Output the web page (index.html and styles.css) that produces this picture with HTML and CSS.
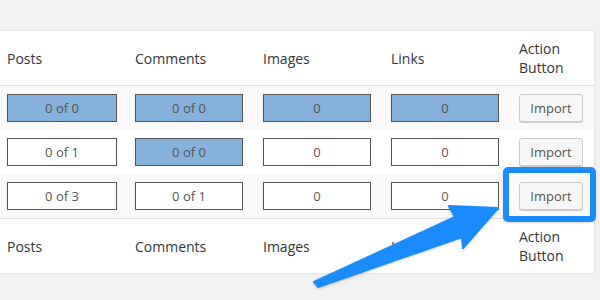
FILE: index.html
```html
<!DOCTYPE html>
<html lang="en">
<head>
  <meta charset="UTF-8" />
  <title>Import</title>
  <link rel="stylesheet" href="styles.css">
</head>
<body>
  <div class="panel">
    <table class="import-table">
      <colgroup>
        <col class="col-data"><col class="col-data"><col class="col-data"><col class="col-data"><col>
      </colgroup>
      <thead>
        <tr>
          <th>Posts</th>
          <th>Comments</th>
          <th>Images</th>
          <th>Links</th>
          <th>Action Button</th>
        </tr>
      </thead>
      <tbody>
        <tr class="alt">
          <td><input class="count first done" type="text" value="0 of 0" readonly></td>
          <td><input class="count done" type="text" value="0 of 0" readonly></td>
          <td><input class="count done" type="text" value="0" readonly></td>
          <td><input class="count done" type="text" value="0" readonly></td>
          <td><button class="button">Import</button></td>
        </tr>
        <tr>
          <td><input class="count first" type="text" value="0 of 1" readonly></td>
          <td><input class="count done" type="text" value="0 of 0" readonly></td>
          <td><input class="count" type="text" value="0" readonly></td>
          <td><input class="count" type="text" value="0" readonly></td>
          <td><button class="button">Import</button></td>
        </tr>
        <tr class="alt">
          <td><input class="count first" type="text" value="0 of 3" readonly></td>
          <td><input class="count" type="text" value="0 of 1" readonly></td>
          <td><input class="count" type="text" value="0" readonly></td>
          <td><input class="count" type="text" value="0" readonly></td>
          <td><button class="button">Import</button></td>
        </tr>
      </tbody>
      <tfoot>
        <tr>
          <th>Posts</th>
          <th>Comments</th>
          <th>Images</th>
          <th>Links</th>
          <th>Action Button</th>
        </tr>
      </tfoot>
    </table>
  </div>

  <!-- callout -->
  <div class="highlight"></div>
  <svg class="arrow" width="600" height="300" viewBox="0 0 600 300">
    <path d="M314 282 L455 217 L449 206 L498 208 L463 248 L462 237 L318 287 Z" fill="#1a8cfd" stroke="#1a8cfd" stroke-width="2" stroke-linejoin="round"/>
  </svg>
</body>
</html>
```

FILE: styles.css
```css
body {
  margin: 0;
  padding-top: 30px;
  background: #f1f1f1;
  font-family: "Open Sans", sans-serif;
  color: #32373c;
}

.panel {
  width: 594px;
  margin-left: -1px;
  background: #fff;
  border: 1px solid #e5e5e5;
  box-shadow: 0 1px 1px rgba(0,0,0,0.04);
}

.import-table {
  width: 100%;
  border-collapse: collapse;
  table-layout: fixed;
}

.col-data {
  width: 128px;
}

.import-table th {
  height: 54px;
  padding: 0 7px;
  text-align: left;
  font-weight: normal;
  font-size: 14px;
  line-height: 19px;
  vertical-align: middle;
}

.import-table thead tr {
  border-bottom: 1px solid #e1e1e1;
}

.import-table tfoot tr {
  border-top: 1px solid #e1e1e1;
}

.import-table td {
  height: 44px;
  padding: 0 7px;
  vertical-align: middle;
}

.import-table tr.alt {
  background: #f9f9f9;
}

.count {
  display: block;
  box-sizing: border-box;
  width: 108px;
  height: 28px;
  margin: 0;
  padding: 0;
  border: 1px solid #555;
  background: #fff;
  font-family: "Open Sans", sans-serif;
  font-size: 13px;
  color: #555;
  text-align: center;
}

.count.first {
  width: 110px;
}

.count.done {
  background: #85b1da;
}

.button {
  display: block;
  box-sizing: border-box;
  width: 64px;
  height: 28px;
  padding: 0;
  border: 1px solid #ccc;
  border-radius: 3px;
  background: #f7f7f7;
  box-shadow: 0 1px 0 #ccc;
  font-family: "Open Sans", sans-serif;
  font-size: 13px;
  color: #555;
  cursor: pointer;
}

/* Callout */
.highlight {
  position: absolute;
  left: 503px;
  top: 167px;
  width: 93px;
  height: 55px;
  box-sizing: border-box;
  border: 6px solid #1a8cfd;
  border-radius: 5px;
  box-shadow: 0 1px 2px rgba(0,0,0,0.15);
}

.arrow {
  position: absolute;
  left: 0;
  top: 0;
  filter: drop-shadow(0 1px 1px rgba(0,0,0,0.2));
}
```
